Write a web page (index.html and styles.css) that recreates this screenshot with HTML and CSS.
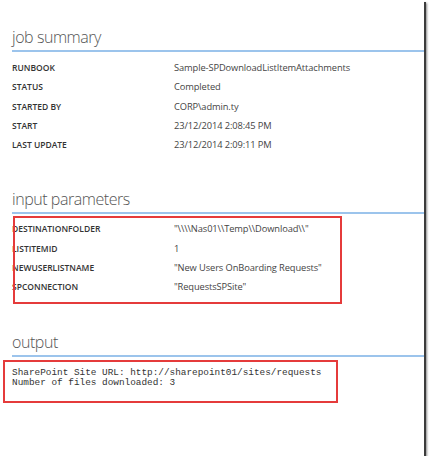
FILE: index.html
```html
<!DOCTYPE html>
<html>
<head>
<meta charset="utf-8">
<link rel="stylesheet" href="styles.css">
</head>
<body>
<div class="frame">
  <section class="section">
    <h2 class="heading heading-first">job summary</h2>
    <dl class="props">
      <dt>RUNBOOK</dt><dd>Sample-SPDownloadListItemAttachments</dd>
      <dt>STATUS</dt><dd>Completed</dd>
      <dt>STARTED BY</dt><dd>CORP\admin.ty</dd>
      <dt>START</dt><dd>23/12/2014 2:08:45 PM</dd>
      <dt>LAST UPDATE</dt><dd>23/12/2014 2:09:11 PM</dd>
    </dl>
  </section>
  <section class="section">
    <h2 class="heading">input parameters</h2>
    <dl class="props params">
      <dt>DESTINATIONFOLDER</dt><dd>"\\\\Nas01\\Temp\\Download\\"</dd>
      <dt>LISTITEMID</dt><dd>1</dd>
      <dt>NEWUSERLISTNAME</dt><dd>"New Users OnBoarding Requests"</dd>
      <dt>SPCONNECTION</dt><dd>"RequestsSPSite"</dd>
      <div class="highlight"></div>
    </dl>
  </section>
  <section class="section">
    <h2 class="heading heading-output">output</h2>
    <pre class="output">SharePoint Site URL: http://sharepoint01/sites/requests
Number of files downloaded: 3</pre>
  </section>
</div>
</body>
</html>
```

FILE: styles.css
```css
html, body {
  margin: 0;
  padding: 0;
  background: #ffffff;
}

.frame {
  width: 424px;
  height: 456px;
  background: #ffffff;
  box-shadow: 2px 2px 0 #3c3c3c, 3px 3px 2px rgba(0, 0, 0, 0.45);
  overflow: hidden;
  font-family: "Open Sans", "Liberation Sans", sans-serif;
}

.heading {
  margin: 36px 0 0 12px;
  padding: 0 0 4px 0;
  font-size: 16px;
  letter-spacing: -0.45px;
  line-height: 18px;
  font-weight: 300;
  color: #555555;
  border-bottom: 2px solid #9cc4ec;
}

.heading-first {
  margin-top: 28px;
}

.heading-output {
  margin-top: 37px;
}

.props {
  position: relative;
  display: grid;
  grid-template-columns: 162px 1fr;
  grid-auto-rows: 19.25px;
  margin: 6px 0 0 12px;
  align-items: center;
}

.props dt {
  font-size: 8.5px;
  font-weight: 600;
  color: #333333;
  line-height: 19.25px;
}

.props dd {
  margin: 0;
  font-size: 9.3px;
  letter-spacing: -0.1px;
  color: #444444;
  line-height: 19.25px;
}

.params {
  margin-top: 5px;
}

.highlight {
  position: absolute;
  left: 1px;
  top: -3px;
  width: 329px;
  height: 88px;
  box-sizing: border-box;
  border: 2px solid #e53b3b;
}

.output {
  margin: 3px 0 0 3px;
  width: 335px;
  height: 43px;
  box-sizing: border-box;
  padding: 6px 0 0 7px;
  border: 2px solid #e53b3b;
  font-family: "Liberation Mono", "Courier New", monospace;
  font-size: 9.4px;
  line-height: 10px;
  color: #333333;
}
```
